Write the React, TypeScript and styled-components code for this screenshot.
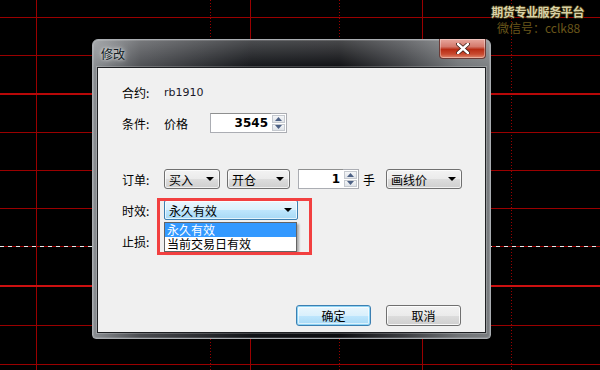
import React from 'react';
import styled, { createGlobalStyle, css } from 'styled-components';

const GlobalStyle = createGlobalStyle`
  *, *::before, *::after {
    box-sizing: border-box;
  }
  html, body {
    margin: 0;
    padding: 0;
    background: #000;
  }
  body {
    font-family: "Noto Sans CJK SC", "Liberation Sans", sans-serif;
    font-size: 12px;
    color: #000;
  }
`;

const Screen = styled.div`
  position: relative;
  width: 600px;
  height: 370px;
  overflow: hidden;
  background: #000;
`;

const Grid = styled.svg`
  position: absolute;
  left: 0;
  top: 0;
`;

const Watermark = styled.div`
  position: absolute;
  right: 16px;
  top: 4px;
  display: flex;
  flex-direction: column;
  align-items: center;
  line-height: 16px;
`;

const MarkTitle = styled.div`
  font-size: 12px;
  font-weight: bold;
  letter-spacing: -0.4px;
  color: #d9d2a6;
  text-shadow: -1px 0 #3a3010, 1px 0 #3a3010, 0 -1px #3a3010, 0 1px #3a3010;
`;

const MarkSub = styled.div`
  font-size: 12px;
  color: #6a561a;
  padding-left: 2px;
`;

const Window = styled.div`
  position: absolute;
  left: 92px;
  top: 39px;
  width: 399px;
  height: 300px;
  border: 1px solid #a9adb1;
  border-radius: 6px 6px 4px 4px;
  background:
    linear-gradient(180deg, rgba(255, 255, 255, 0.25) 0%, rgba(255, 255, 255, 0) 30px),
    linear-gradient(90deg, #8a8e92 0%, #4a4c50 12%, #101216 40%, #0b0c0f 62%, #3a3c40 78%, #707376 92%, #7a7d80 100%);
  box-shadow: inset 0 0 0 1px rgba(255, 255, 255, 0.15);
  display: flex;
  flex-direction: column;
  padding: 0 4px 5px 4px;
`;

const TitleBar = styled.div`
  position: relative;
  height: 27px;
  flex: none;
  display: flex;
  align-items: center;
  padding-left: 4px;
  color: #0f1a22;
  font-size: 12px;
  text-shadow: 0 0 6px rgba(255, 255, 255, 0.9), 0 0 3px rgba(255, 255, 255, 0.8);
`;

const CloseButton = styled.div`
  position: absolute;
  right: 0px;
  top: -1px;
  width: 47px;
  height: 20px;
  border: 1px solid #6a3a36;
  border-top: none;
  border-radius: 0 0 4px 4px;
  background: linear-gradient(180deg, #e8a89e 0%, #d4796c 40%, #b82c14 55%, #c84a30 80%, #e08a70 100%);
  box-shadow: inset 0 0 0 1px rgba(255, 255, 255, 0.35);
  display: flex;
  align-items: center;
  justify-content: center;
`;

const Client = styled.div`
  position: relative;
  flex: 1;
  background: #f0f0f0;
  border: 1px solid #1e2023;
  box-shadow: 0 0 0 1px rgba(255, 255, 255, 0.2);
  display: flex;
  flex-direction: column;
  padding: 14px 24px 6px 24px;
`;

const Row = styled.div<{ $gap: number }>`
  display: flex;
  align-items: center;
  height: 20px;
  margin-top: ${({ $gap }) => $gap}px;
`;

const Label = styled.div`
  width: 42px;
  flex: none;
  white-space: nowrap;
`;

const Value = styled.div`
  font-family: "DejaVu Sans", sans-serif;
  font-size: 11px;
  color: #1a1a2a;
`;

const PlainText = styled.div<{ $width?: number }>`
  width: ${({ $width }) => ($width ? `${$width}px` : 'auto')};
  flex: none;
`;

const Spin = styled.div<{ $width: number }>`
  display: flex;
  width: ${({ $width }) => $width}px;
  height: 20px;
  flex: none;
`;

const SpinInput = styled.div`
  flex: 1;
  background: #fff;
  border: 1px solid #abadb3;
  border-top-color: #8e8f8f;
  border-right: none;
  display: flex;
  align-items: center;
  justify-content: flex-end;
  padding-right: 3px;
  font-family: "DejaVu Sans", sans-serif;
  font-weight: bold;
  font-size: 12px;
`;

const SpinButtons = styled.div`
  width: 16px;
  display: flex;
  flex-direction: column;
  border: 1px solid #abadb3;
  border-left: none;
  background: #fff;
  padding: 1px;
  gap: 1px;
`;

const SpinButton = styled.div`
  flex: 1;
  border: 1px solid #c5c9cf;
  background: linear-gradient(180deg, #f4f6f8, #dfe3e8);
  display: flex;
  align-items: center;
  justify-content: center;
`;

const Combo = styled.div<{ $width: number; $active?: boolean }>`
  width: ${({ $width }) => $width}px;
  height: 20px;
  flex: none;
  border: 1px solid #707070;
  border-radius: 3px;
  background: linear-gradient(180deg, #f3f3f3 0%, #ebebeb 50%, #dddddd 51%, #cfcfcf 100%);
  box-shadow: inset 0 0 0 1px rgba(255, 255, 255, 0.7);
  display: flex;
  align-items: center;
  justify-content: space-between;
  padding: 0 5px 0 4px;
  ${({ $active }) =>
    $active &&
    css`
      border-color: #3c7fb1;
      border-radius: 2px;
      background: linear-gradient(180deg, #eaf6fd 0%, #d9f0fc 50%, #bee6fd 51%, #a7d9f5 100%);
    `}
`;

const Arrow = styled.div`
  width: 0;
  height: 0;
  border-left: 4px solid transparent;
  border-right: 4px solid transparent;
  border-top: 4px solid #000;
`;

const Unit = styled.div`
  margin: 0 11px 0 4px;
`;

const DropList = styled.div`
  position: absolute;
  left: 66px;
  top: 154px;
  width: 133px;
  background: #fff;
  border: 1px solid #646464;
  box-shadow: 2px 2px 2px rgba(0, 0, 0, 0.3);
  z-index: 2;
`;

const DropItem = styled.div<{ $selected?: boolean }>`
  height: 14px;
  line-height: 14px;
  padding-left: 2px;
  white-space: nowrap;
  background: ${({ $selected }) => ($selected ? '#3399ff' : '#fff')};
  color: ${({ $selected }) => ($selected ? '#fff' : '#000')};
`;

const Highlight = styled.div`
  position: absolute;
  left: 59px;
  top: 130px;
  width: 155px;
  height: 57px;
  border: 3px solid #f24040;
  z-index: 3;
`;

const Footer = styled.div`
  margin-top: auto;
  display: flex;
  justify-content: flex-end;
  gap: 15px;
`;

const Button = styled.div<{ $primary?: boolean }>`
  width: 75px;
  height: 21px;
  border: 1px solid #707070;
  border-radius: 3px;
  background: linear-gradient(180deg, #f2f2f2 0%, #ebebeb 50%, #dddddd 51%, #cfcfcf 100%);
  box-shadow: inset 0 0 0 1px rgba(255, 255, 255, 0.8);
  display: flex;
  align-items: center;
  justify-content: center;
  ${({ $primary }) =>
    $primary &&
    css`
      border-color: #3c7fb1;
      background: linear-gradient(180deg, #eaf6fd 0%, #d9f0fc 50%, #bee6fd 51%, #a7d9f5 100%);
      box-shadow: inset 0 0 0 1px #8ed4f5, inset 0 0 0 2px rgba(255, 255, 255, 0.6);
    `}
`;

const hLines = [17, 55, 132, 170, 208, 325, 364];
const vSolid = [36, 250, 422];
const vDotted = [210, 339, 511];

const ChartGrid: React.FC = () => (
  <Grid width={600} height={370}>
    {vSolid.map((x) => (
      <line key={x} x1={x + 0.5} y1={0} x2={x + 0.5} y2={370} stroke="#9a0000" strokeWidth={1} />
    ))}
    {vDotted.map((x) => (
      <line key={x} x1={x + 0.5} y1={0} x2={x + 0.5} y2={370} stroke="#9a0000" strokeWidth={1} strokeDasharray="1 2" />
    ))}
    {hLines.map((y) => (
      <line key={y} x1={0} y1={y + 0.5} x2={600} y2={y + 0.5} stroke="#9a0000" strokeWidth={1} />
    ))}
    <line x1={0} y1={94} x2={600} y2={94} stroke="#b80808" strokeWidth={2} />
    <line x1={0} y1={286} x2={600} y2={286} stroke="#cc1010" strokeWidth={2} />
    <line x1={0} y1={246.5} x2={600} y2={246.5} stroke="#9a0000" strokeWidth={1} />
    <line x1={0} y1={246.5} x2={600} y2={246.5} stroke="#e8e8e8" strokeWidth={1} strokeDasharray="4 4" />
  </Grid>
);

const SmallTri: React.FC<{ up?: boolean }> = ({ up }) => (
  <svg width={7} height={4} viewBox="0 0 7 4">
    <polygon points={up ? '3.5,0 7,4 0,4' : '0,0 7,0 3.5,4'} fill="#4d6185" />
  </svg>
);

const Spinner: React.FC<{ width: number; value: string }> = ({ width, value }) => (
  <Spin $width={width}>
    <SpinInput>{value}</SpinInput>
    <SpinButtons>
      <SpinButton>
        <SmallTri up />
      </SpinButton>
      <SpinButton>
        <SmallTri />
      </SpinButton>
    </SpinButtons>
  </Spin>
);

const Select: React.FC<{ width: number; text: string; active?: boolean }> = ({ width, text, active }) => (
  <Combo $width={width} $active={active}>
    <span>{text}</span>
    <Arrow />
  </Combo>
);

export default function App() {
  return (
    <Screen>
      <GlobalStyle />
      <ChartGrid />
      <Watermark>
        <MarkTitle>期货专业服务平台</MarkTitle>
        <MarkSub>微信号：cclk88</MarkSub>
      </Watermark>
      <Window>
        <TitleBar>
          修改
          <CloseButton>
            <svg width={14} height={11} viewBox="0 0 14 11">
              <path d="M2 1 L12 10 M12 1 L2 10" stroke="#3a1a14" strokeWidth={4} strokeLinecap="round" />
              <path d="M2 1 L12 10 M12 1 L2 10" stroke="#fff" strokeWidth={2.4} strokeLinecap="round" />
            </svg>
          </CloseButton>
        </TitleBar>
        <Client>
          <Row $gap={0}>
            <Label>合约:</Label>
            <Value>rb1910</Value>
          </Row>
          <Row $gap={11}>
            <Label>条件:</Label>
            <PlainText $width={46}>价格</PlainText>
            <Spinner width={77} value="3545" />
          </Row>
          <Row $gap={36}>
            <Label>订单:</Label>
            <Select width={56} text="买入" />
            <PlainText $width={7} />
            <Select width={63} text="开仓" />
            <PlainText $width={8} />
            <Spinner width={61} value="1" />
            <Unit>手</Unit>
            <Select width={76} text="画线价" />
          </Row>
          <Row $gap={11}>
            <Label>时效:</Label>
            <Select width={134} text="永久有效" active />
          </Row>
          <Row $gap={11}>
            <Label>止损:</Label>
          </Row>
          <Footer>
            <Button $primary>确定</Button>
            <Button>取消</Button>
          </Footer>
          <DropList>
            <DropItem $selected>永久有效</DropItem>
            <DropItem>当前交易日有效</DropItem>
          </DropList>
          <Highlight />
        </Client>
      </Window>
    </Screen>
  );
}
